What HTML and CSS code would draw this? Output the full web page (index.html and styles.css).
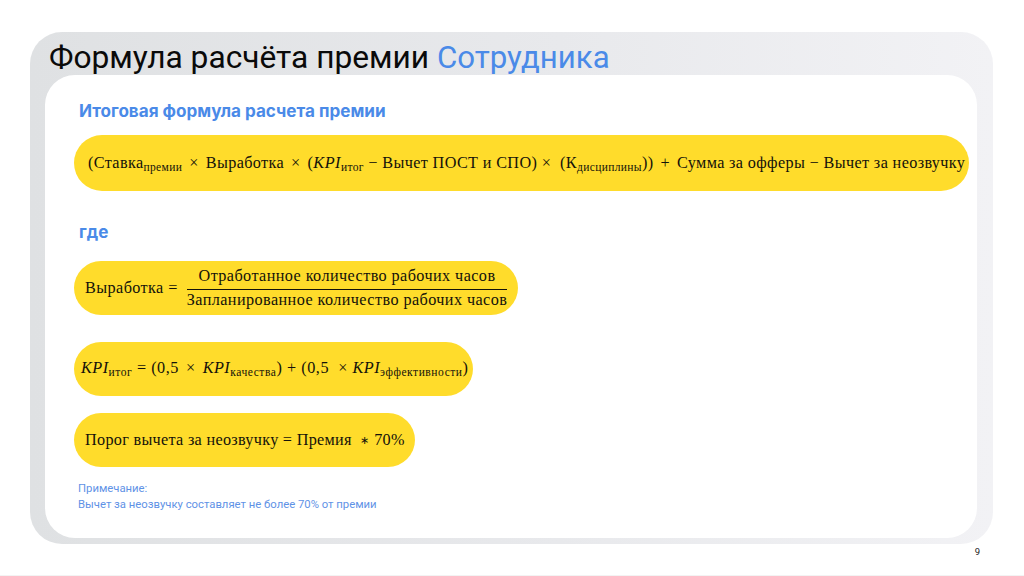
FILE: index.html
```html
<!DOCTYPE html>
<html lang="ru">
<head>
<meta charset="utf-8">
<title>Формула расчёта премии</title>
<link rel="stylesheet" href="styles.css">
</head>
<body>
<main class="slide">
  <section class="panel">
    <h1 class="title">Формула расчёта премии <span class="accent">Сотрудника</span></h1>
    <div class="card">
      <h2 class="heading">Итоговая формула расчета премии</h2>
      <div class="pill pill-main">(Ставка<sub>премии</sub><span class="op">×</span>Выработка<span class="op">×</span>(<i>KPI</i><sub>итог</sub> − Вычет ПОСТ и СПО) ×&nbsp; (К<sub>дисциплины</sub>))<span class="op">+</span>Сумма за офферы − Вычет за неозвучку</div>
      <h2 class="heading heading-where">где</h2>
      <div class="pill pill-frac">
        <span>Выработка =</span>
        <span class="frac"><span class="num">Отработанное количество рабочих часов</span><span class="den">Запланированное количество рабочих часов</span></span>
      </div>
      <div class="pill pill-kpi"><i>KPI</i><sub>итог</sub> = (0,5<span class="op">×</span><i>KPI</i><sub>качества</sub>) + (0,5 &nbsp;× <i>KPI</i><sub>эффективности</sub>)</div>
      <div class="pill pill-limit">Порог вычета за неозвучку = Премия&nbsp; <span class="star">∗</span> 70%</div>
      <p class="note">Примечание:<br>Вычет за неозвучку составляет не более 70% от премии</p>
    </div>
  </section>
  <div class="page-num">9</div>
</main>
</body>
</html>
```

FILE: styles.css
```css
* { box-sizing: border-box; }
html, body { margin: 0; padding: 0; background: #fff; }
.slide {
  width: 1024px;
  height: 576px;
  padding: 32px 31px 0 30px;
  overflow: hidden;
  border-bottom: 1px solid #f3f3f3;
}
.panel {
  height: 512px;
  padding: 0 16px 6px 15px;
  border-radius: 32px;
  background: linear-gradient(90deg, #dfe1e3, #e8e9ec 55%, #f2f2f5);
  display: flex;
  flex-direction: column;
}
.title {
  margin: 0;
  height: 43px;
  padding: 7px 0 0 4px;
  font: 400 31.7px/37px Roboto, sans-serif;
  color: #0a0a0a;
  white-space: nowrap;
}
.accent { color: #4a8ae8; font-size: 31.2px; }
.card {
  flex: 1;
  background: #fff;
  border-radius: 30px;
  padding: 26px 8px 0 29px;
  display: flex;
  flex-direction: column;
  align-items: flex-start;
}
.heading {
  margin: 0 0 0 5px;
  font: 700 17.1px/20px Inter, Roboto, sans-serif;
  color: #4a8ae8;
  white-space: nowrap;
}
.heading-where { margin-top: 31px; }
.pill {
  background: #ffdc2b;
  color: #14120a;
  border-radius: 28px;
  height: 54px;
  display: flex;
  align-items: center;
  font: 400 16.2px/20px "Liberation Serif", serif;
  white-space: pre;
}
.pill sub { font-size: 11.5px; line-height: 0; vertical-align: -3px; }
.pill i { letter-spacing: 0.5px; }
.op { margin: 0 7px; }
.pill-main {
  display: block;
  width: 895px;
  height: 56px;
  margin-top: 14px;
  padding: 18px 0 0 14px;
  letter-spacing: 0.37px;
}
.pill-frac { width: 444px; margin-top: 19px; padding-left: 11px; gap: 9px; letter-spacing: 0.42px; }
.frac { display: flex; flex-direction: column; align-items: stretch; text-align: center; }
.num { border-bottom: 1.5px solid #14120a; line-height: 23px; padding-bottom: 1px; }
.den { line-height: 21px; }
.pill-kpi { display: block; width: 399px; margin-top: 27px; padding: 16px 0 0 7px; letter-spacing: 0.55px; }
.pill-limit { width: 341px; margin-top: 17px; padding-left: 11px; letter-spacing: 0.3px; }
.star { font-size: 11px; }
.note {
  margin: 14px 0 0 4px;
  font: 400 11.3px/16px Roboto, sans-serif;
  color: #5f92e6;
  white-space: nowrap;
}
.page-num {
  width: 950px;
  text-align: right;
  margin-top: 2px;
  font: 400 9.5px/12px Roboto, sans-serif;
  color: #222;
}
```
